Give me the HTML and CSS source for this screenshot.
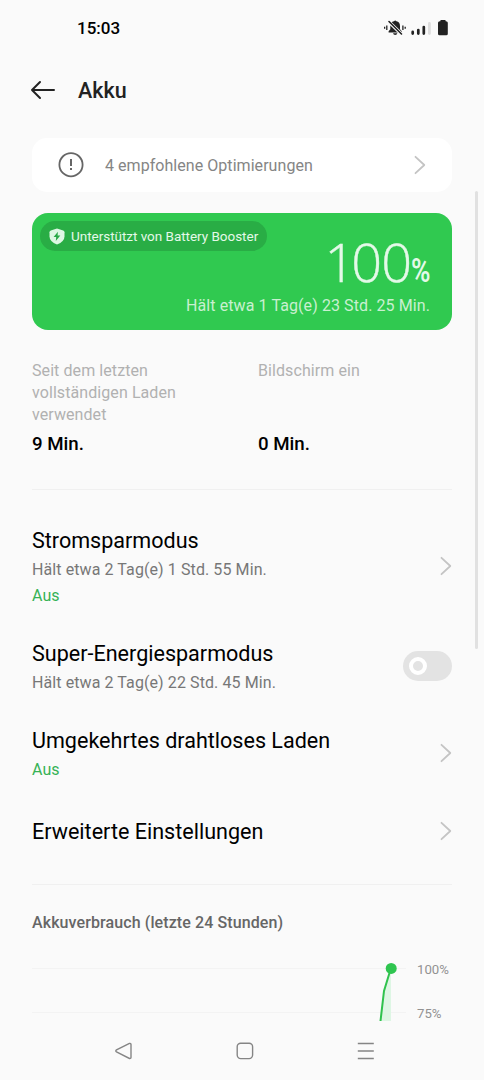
FILE: index.html
```html
<!DOCTYPE html>
<html lang="de">
<head>
<meta charset="utf-8">
<title>Akku</title>
<link rel="stylesheet" href="styles.css">
</head>
<body>
<div class="screen">
  <div class="status">
    <span class="clock">15:03</span>
    <svg class="status-icons" width="66" height="18" viewBox="0 0 66 18">
      <path fill="#222" d="M4.600 13.500V12.300L6.300 10.300V7.200Q6.300 3 10 2.300Q11.200 .7 12.400 2.300Q16 3 16 7.200V10.300L17.800 12.300V13.500ZM9 14.200H13.400Q13 16 11.200 16Q9.400 16 9 14.200Z"/>
      <path stroke="#fafafa" stroke-width="3.200" d="M4 2L18 15.500"/>
      <path stroke="#222" stroke-width="1.600" stroke-linecap="round" d="M5 2.500L17.500 15"/>
      <path stroke="#222" stroke-width="1.300" d="M2.800 6.500V11M.6 7.800V9.800M18.900 6.500V11M21.200 7.800V9.800"/>
      <path stroke="#222" stroke-width="2.700" stroke-linecap="round" d="M28.700 12.900V14.600M34.300 11V14.600M39.800 8V14.600"/>
      <path stroke="#ddd" stroke-width="2.800" stroke-linecap="round" d="M45.400 4.400V14.600"/>
      <path fill="#222" d="M57 1H61Q61.700 1 61.700 2.300H62Q63.800 2.300 63.800 3.800V14.700Q63.800 16.200 62.300 16.200H55.500Q54 16.200 54 14.700V3.800Q54 2.300 55.800 2.300H56.300Q56.300 1 57 1Z"/>
    </svg>
  </div>
  <header class="toolbar">
    <svg width="26" height="20" viewBox="0 0 26 20" fill="none" stroke="#222" stroke-width="2" stroke-linecap="round" stroke-linejoin="round"><path d="M10 2L2 10L10 18M2 10H24"/></svg>
    <h1 class="page-title">Akku</h1>
  </header>
  <main class="content">
    <div class="tip">
      <svg width="26" height="26" viewBox="0 0 26 26" fill="none" stroke="#666"><circle cx="13" cy="12.700" r="11.600" stroke-width="1.800"/><path stroke-width="2" d="M13 7V14M13 16V18"/></svg>
      <span class="tip-text">4 empfohlene Optimierungen</span>
      <svg class="chevron" viewBox="0 0 12 20"><path d="M1.500 1.800L10.300 10L1.500 18.200"/></svg>
    </div>
    <section class="battery">
      <div class="booster">
        <svg width="16" height="17" viewBox="0 0 16 17"><path fill="#def7e3" d="M8 .5L14.200 2.500Q15.500 3 15.500 4.300V8.500Q15.500 13.500 8 16.500Q.5 13.500 .5 8.500V4.300Q.5 3 1.800 2.500Z"/><path fill="#29a846" d="M8.900 3.700L4.600 9H7.200L6.800 13L11.300 7.500H8.600Z"/></svg>
        <span class="booster-text">Unterstützt von Battery Booster</span>
      </div>
      <div class="level"><span class="number"><span class="digit-one">1</span>00</span><span class="percent">%</span></div>
      <div class="remaining">Hält etwa 1 Tag(e) 23 Std. 25 Min.</div>
    </section>
    <section class="stats">
      <div class="stat"><span class="stat-label">Seit dem letzten<br>vollständigen Laden<br>verwendet</span><b class="stat-value">9 Min.</b></div>
      <div class="stat"><span class="stat-label">Bildschirm ein</span><b class="stat-value">0 Min.</b></div>
    </section>
    <section class="settings">
      <div class="row">
        <div class="row-text"><span class="name">Stromsparmodus</span><span class="detail">Hält etwa 2 Tag(e) 1 Std. 55 Min.</span><span class="state">Aus</span></div>
        <svg class="chevron" viewBox="0 0 12 20"><path d="M1.500 1.800L10.300 10L1.500 18.200"/></svg>
      </div>
      <div class="row">
        <div class="row-text"><span class="name">Super-Energiesparmodus</span><span class="detail">Hält etwa 2 Tag(e) 22 Std. 45 Min.</span></div>
        <div class="toggle"><div class="knob"></div></div>
      </div>
      <div class="row">
        <div class="row-text"><span class="name">Umgekehrtes drahtloses Laden</span><span class="state">Aus</span></div>
        <svg class="chevron" viewBox="0 0 12 20"><path d="M1.500 1.800L10.300 10L1.500 18.200"/></svg>
      </div>
      <div class="row row-last">
        <div class="row-text"><span class="name">Erweiterte Einstellungen</span></div>
        <svg class="chevron" viewBox="0 0 12 20"><path d="M1.500 1.800L10.300 10L1.500 18.200"/></svg>
      </div>
    </section>
    <section class="usage">
      <h2 class="usage-title">Akkuverbrauch (letzte 24 Stunden)</h2>
      <div class="chart">
        <svg width="374" height="61" viewBox="0 0 374 61" fill="none">
          <path stroke="#f3f3f3" d="M0 8.500H374M0 52.500H374"/>
          <path fill="#def6e4" d="M359 8L352 31L348 61H359Z"/>
          <path stroke="#30c24e" stroke-width="2" d="M359 8L352 31L348.500 61"/>
          <circle cx="359.200" cy="8.400" r="5.500" fill="#2fc550"/>
        </svg>
        <div class="axis"><span>100%</span><span>75%</span></div>
      </div>
    </section>
  </main>
  <nav class="nav">
    <svg width="18" height="18" viewBox="0 0 18 18"><path d="M14.500 1.400L1.500 7.900Q.1 9 1.500 10L14.500 16.500Q16 16.700 16 15.300V2.600Q16 1.200 14.500 1.400Z"/></svg>
    <svg width="18" height="18" viewBox="0 0 18 18"><rect x="1.200" y="1.200" width="15.400" height="15.400" rx="3.500"/></svg>
    <svg width="18" height="18" viewBox="0 0 18 18"><path d="M.8 1.500H16.800M.8 9H16.800M.8 16.500H16.800"/></svg>
  </nav>
  <div class="scrollbar"></div>
</div>
</body>
</html>
```
FILE: styles.css
```css
* { box-sizing: border-box; }
body { margin: 0; background: #fafafa; font-family: Roboto, "Liberation Sans", sans-serif; color: #000; }
.screen { position: relative; width: 484px; height: 1080px; overflow: hidden; display: flex; flex-direction: column; white-space: nowrap; }
.status { height: 56px; flex: none; display: flex; align-items: center; justify-content: space-between; padding: 0 34px 0 77px; }
.clock { font-size: 17px; font-weight: 500; }
.toolbar { height: 68px; flex: none; display: flex; align-items: center; gap: 22px; padding-left: 30px; }
.page-title { margin: 0; padding-top: 1px; font-size: 21.5px; font-weight: 500; line-height: 28px; color: #222; }
.content { flex: none; height: 897px; padding: 14px 32px 0; overflow: hidden; }
.chevron { width: 12px; height: 20px; flex: none; fill: none; stroke: #c4c4c4; stroke-width: 1.8; stroke-linecap: round; stroke-linejoin: round; }
.row .chevron { margin-bottom: 2px; }
.tip { height: 54px; border-radius: 15px; background: #fff; display: flex; align-items: center; padding: 0 26px; }
.tip-text { flex: 1; margin-left: 21px; font-size: 16px; letter-spacing: .05px; color: #858585; }
.battery { margin-top: 21px; height: 117px; border-radius: 16px; background: #30c950; color: #e4f9e8; padding: 8px 22px 0 8px; display: grid; grid-template-columns: 227px 1fr; grid-template-rows: 74px 22px; }
.booster { height: 30px; border-radius: 15px; background: #29ad45; display: flex; align-items: center; gap: 6px; padding-left: 9px; }
.booster-text { font-size: 13.5px; letter-spacing: -.03px; }
.level { display: flex; justify-content: flex-end; align-items: baseline; line-height: 80px; }
.number { font-family: "Open Sans", Roboto, sans-serif; font-size: 54px; font-weight: 300; letter-spacing: -1px; -webkit-text-stroke: .4px #e4f9e8; }
.digit-one { letter-spacing: -4px; }
.percent { width: 19px; font-size: 33px; font-weight: 600; transform: scaleX(.8); transform-origin: left; }
.remaining { grid-column: 1 / 3; text-align: right; font-size: 16px; letter-spacing: .09px; line-height: 22px; color: #c9f0d0; }
.stats { height: 160px; padding-top: 29px; border-bottom: 1px solid #f0f0f0; display: grid; grid-template-columns: 226px 1fr; }
.stat { display: flex; flex-direction: column; padding-top: 1px; }
.stat-label { height: 71px; font-size: 16px; letter-spacing: .08px; line-height: 22px; color: #b1b1b1; }
.stat-value { font-size: 18.7px; font-weight: 500; line-height: 26px; }
.settings { height: 395px; padding-top: 37px; border-bottom: 1px solid #f0f0f0; display: flex; flex-direction: column; gap: 33px; }
.row { display: flex; align-items: center; justify-content: space-between; }
.row-last { margin-top: 4px; }
.row-text { display: flex; flex-direction: column; gap: 4px; }
.name { font-size: 21.55px; line-height: 28px; }
.detail, .state { font-size: 16px; letter-spacing: .09px; line-height: 22px; color: #777; }
.state { color: #36b255; }
.toggle { width: 49px; height: 30px; border-radius: 15px; background: #e3e3e3; display: flex; align-items: center; padding-left: 6px; margin-bottom: 3px; }
.knob { width: 18px; height: 18px; border: 4px solid #fff; border-radius: 50%; }
.usage { padding-top: 26px; }
.usage-title { margin: 0; font-size: 16px; font-weight: 500; letter-spacing: .1px; line-height: 24px; color: #666; }
.chart { margin-top: 25px; display: flex; gap: 11px; height: 61px; }
.axis { display: flex; flex-direction: column; gap: 24px; font-size: 13.2px; line-height: 20px; color: #929292; }
.nav { height: 59px; display: flex; justify-content: center; gap: 103px; align-items: center; padding-left: 5px; }
.nav svg { fill: none; stroke: #858585; stroke-width: 1.4; }
.scrollbar { position: absolute; left: 475px; top: 191px; width: 3px; height: 458px; border-radius: 2px; background: #e1e1e1; }
```
